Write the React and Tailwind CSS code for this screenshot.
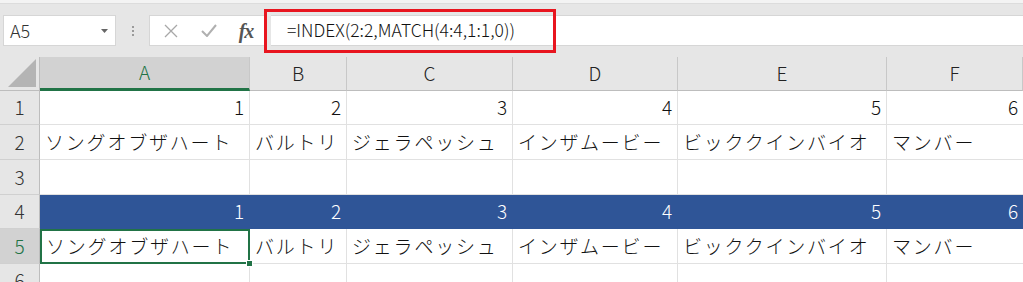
import React from "react";

const cols = ["A", "B", "C", "D", "E", "F"];
const names = ["ソングオブザハート", "バルトリ", "ジェラペッシュ", "インザムービー", "ビッククインバイオ", "マンバー"];
const font = { fontFamily: '"Noto Sans CJK JP", "Noto Sans", sans-serif' };

function RowHead({ n, sel }) {
  return (
    <div
      className={`flex items-center justify-center border-r border-b border-r-[#bdbdbd] border-b-[#d0d0d0] text-[19px] font-light ${
        sel ? "bg-[#d2d2d2] text-[#217346]" : "bg-[#e6e6e6] text-[#333]"
      }`}
    >
      {n}
    </div>
  );
}

function Cell({ children, right, blue, last }) {
  return (
    <div
      className={`flex items-center overflow-hidden whitespace-nowrap text-[19px] font-light tracking-[1.8px] ${
        right ? "justify-end pr-[3px]" : "pl-[5px]"
      } ${
        blue
          ? "bg-[#2f5597] text-white border-b border-b-[#2f5597]"
          : "bg-white text-[#111] border-b border-b-[#e1e1e1]"
      } ${last ? "" : blue ? "border-r border-r-[#2f5597]" : "border-r border-r-[#e1e1e1]"}`}
    >
      {children}
    </div>
  );
}

export default function App() {
  return (
    <div className="w-[1023px] h-[282px] overflow-hidden bg-[#e6e6e6] relative" style={font}>
      {/* ribbon remnant */}
      <div className="h-[4px] bg-[#f3f3f3] border-b border-[#dcdcdc]" />
      {/* formula bar */}
      <div className="h-[53px] flex items-start pt-[11px] pl-[3px]">
        <div className="w-[113px] h-[31px] bg-white border border-[#d6d6d6] flex items-center pl-[6px] pr-[7px] text-[18px] font-light text-[#333]">
          <span className="flex-1">A5</span>
          <svg width="7" height="4" viewBox="0 0 7 4"><path d="M0 0h7L3.5 4z" fill="#666" /></svg>
        </div>
        <div className="w-[33px] h-[31px] flex flex-col items-center justify-center gap-[2px]">
          <div className="w-[2px] h-[2px] bg-[#9a9a9a]" />
          <div className="w-[2px] h-[2px] bg-[#9a9a9a]" />
          <div className="w-[2px] h-[2px] bg-[#9a9a9a]" />
        </div>
        <div className="w-[116px] h-[31px] bg-white border border-[#d6d6d6] flex items-center">
          <div className="w-[40px] flex justify-center pl-[2px]">
            <svg width="14" height="14" viewBox="0 0 14 14">
              <path d="M1 1L13 13M13 1L1 13" stroke="#a8a8a8" strokeWidth="1.3" />
            </svg>
          </div>
          <div className="w-[38px] flex justify-center">
            <svg width="16" height="13" viewBox="0 0 16 13">
              <path d="M1 7L6 12L15 1" stroke="#b0b0b0" strokeWidth="2" fill="none" />
            </svg>
          </div>
          <div
            className="w-[36px] flex justify-center text-[20px] italic font-semibold text-[#555] tracking-[-1px]"
            style={{ fontFamily: '"Liberation Serif", serif' }}
          >
            fx
          </div>
        </div>
        <div className="ml-[6px] flex-1 h-[31px] bg-white border-y border-[#d6d6d6] flex items-center pl-[16px] text-[17.5px] font-light text-[#111]">
          =INDEX(2:2,MATCH(4:4,1:1,0))
        </div>
      </div>
      {/* annotation */}
      <div className="absolute left-[264px] top-[9px] w-[292px] h-[44px] border-[3px] border-[#e8151f]" />

      {/* grid */}
      <div
        className="grid"
        style={{ gridTemplateColumns: "40px 210px 97px 166px 165px 209px 136px", gridTemplateRows: "34px 34px 35px 35px 34px 35px 34px" }}
      >
        <div className="bg-[#e6e6e6] border-r border-b border-r-[#bdbdbd] border-b-[#bdbdbd] flex items-end justify-end pr-[3px] pb-[3px]">
          <svg width="28" height="28" viewBox="0 0 28 28"><path d="M28 0V28H0z" fill="#b4b4b4" /></svg>
        </div>
        {cols.map((c, i) => (
          <div
            key={c}
            className={`flex items-center justify-center text-[19px] font-light border-r border-r-[#c8c8c8] ${
              i === 0
                ? "bg-[#d2d2d2] text-[#217346] border-b-[3px] border-b-[#217346]"
                : "bg-[#e6e6e6] text-[#222] border-b border-b-[#bdbdbd]"
            }`}
          >
            {c}
          </div>
        ))}

        <RowHead n={1} />
        {cols.map((c, i) => (
          <Cell key={c} right last={i === 5}>{i + 1}</Cell>
        ))}

        <RowHead n={2} />
        {names.map((t, i) => (
          <Cell key={i} last={i === 5}>{t}</Cell>
        ))}

        <RowHead n={3} />
        {cols.map((c, i) => (
          <Cell key={c} last={i === 5} />
        ))}

        <RowHead n={4} />
        {cols.map((c, i) => (
          <Cell key={c} right blue last={i === 5}>{i + 1}</Cell>
        ))}

        <RowHead n={5} sel />
        {names.map((t, i) =>
          i === 0 ? (
            <div
              key={i}
              className="relative flex items-center pl-[4px] bg-white text-[#111] text-[19px] font-light tracking-[1.8px] whitespace-nowrap border-2 border-[#217346]"
            >
              {t}
              <div className="absolute right-[-5px] bottom-[-5px] w-[7px] h-[7px] bg-[#217346] border border-white" />
            </div>
          ) : (
            <Cell key={i} last={i === 5}>{t}</Cell>
          )
        )}

        <RowHead n={6} />
        {cols.map((c, i) => (
          <Cell key={c} last={i === 5} />
        ))}
      </div>
    </div>
  );
}
